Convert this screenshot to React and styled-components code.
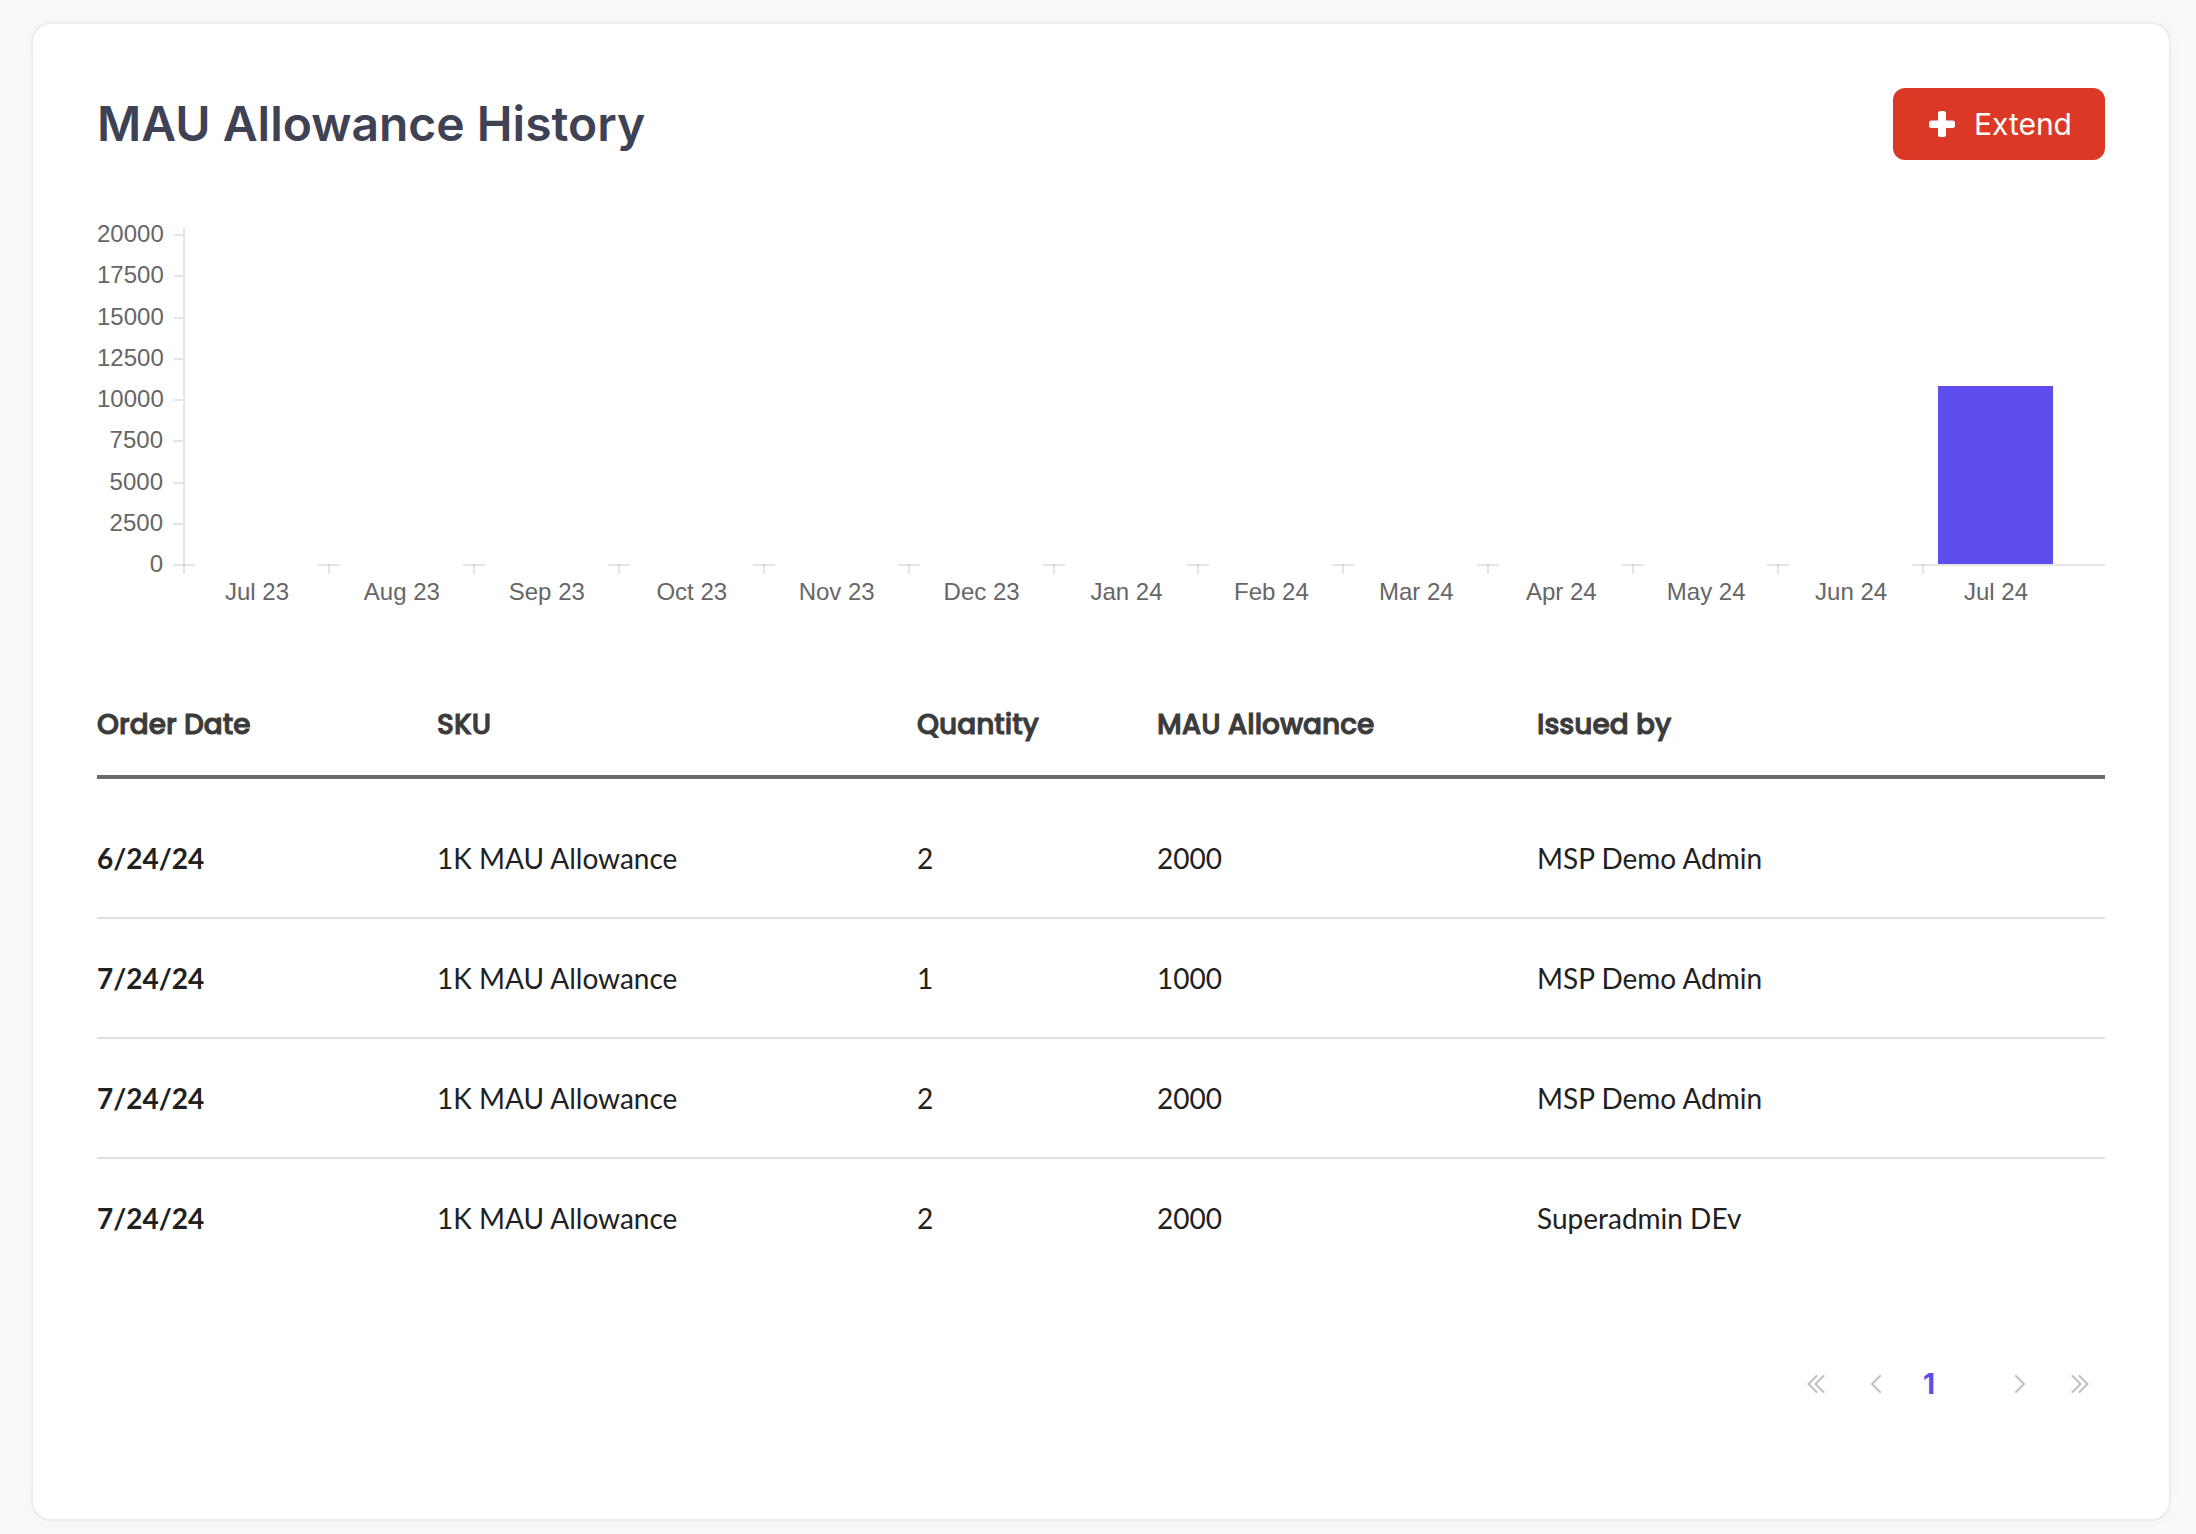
import React from "react";
import styled, { createGlobalStyle } from "styled-components";

const GlobalStyle = createGlobalStyle`
  *, *::before, *::after { box-sizing: border-box; }
  body {
    margin: 0;
    background: #f8f9fb;
    font-family: Inter, "Liberation Sans", sans-serif;
  }
`;

const axisColor = "rgba(0, 0, 0, 0.1)";

const Page = styled.main`
  padding: 22px 25px 10px 31px;
`;

const Card = styled.section`
  display: flex;
  flex-direction: column;
  padding: 64px;
  border: 2px solid #ebebf0;
  border-radius: 20px;
  background: #fff;
  box-shadow: 0 0 20px rgba(0, 0, 0, 0.02);
`;

const Header = styled.header`
  display: flex;
  align-items: center;
  justify-content: space-between;
`;

const Title = styled.h1`
  margin: 0;
  color: #3f4254;
  font-size: 48px;
  font-weight: 600;
  line-height: 72px;
`;

const ExtendButton = styled.button`
  display: flex;
  align-items: center;
  gap: 16px;
  height: 72px;
  padding: 0 33px;
  border: 0;
  border-radius: 12px;
  background: #db3926;
  color: #fff;
  font: 400 30px/36px Inter, sans-serif;
  cursor: pointer;
`;

const PlusIcon = styled.svg`
  width: 32px;
  height: 32px;
  fill: currentColor;
`;

const Chart = styled.figure`
  display: grid;
  grid-template-columns: 86px 1fr;
  margin: 60px 0 0;
  color: #666;
  font: 24px/28px "Liberation Sans", sans-serif;
`;

const YAxis = styled.div`
  display: flex;
  flex-direction: column;
  justify-content: space-between;
  height: 360px;
`;

const YRow = styled.div`
  display: flex;
  justify-content: flex-end;
  gap: 10px;
  height: 30px;
`;

const YTick = styled.span`
  align-self: center;
  width: 10px;
  height: 2px;
  background: ${axisColor};
`;

const Plot = styled.div`
  display: flex;
  padding-top: 8px;
`;

const AxisLine = styled.span`
  width: 2px;
  height: 336px;
  margin-right: -2px;
  background: ${axisColor};
`;

const Month = styled.div`
  display: flex;
  flex: 1 1 0;
  flex-direction: column;
`;

const BarArea = styled.div`
  display: flex;
  justify-content: center;
  align-items: flex-end;
  height: 336px;
  padding-left: 2px;
`;

const Bar = styled.div`
  width: 81%;
  background: #5d4eeb;
`;

const MonthTick = styled.div`
  display: flex;
  justify-content: space-between;
  height: 10px;
  border-left: 2px solid ${axisColor};
`;

const Dash = styled.span`
  flex: ${(p) => (p.$full ? "1" : "0 0 12px")};
  height: 2px;
  background: ${axisColor};
  &:first-child { margin-left: -2px; }
  &:last-child:not(:first-child) { flex-basis: 10px; }
`;

const MonthLabel = styled.span`
  padding-left: 3px;
  margin-top: 4px;
  text-align: center;
  white-space: nowrap;
`;

const AxisTail = styled.span`
  width: 38px;
  height: 2px;
  margin-top: 336px;
  background: ${axisColor};
`;

const Table = styled.table`
  width: 100%;
  margin-top: 65px;
  border-collapse: separate;
  border-spacing: 0;
  table-layout: fixed;
  color: #212121;
  font: 28px/36px Lato, sans-serif;
`;

const Column = styled.col`
  width: ${(p) => p.$width};
`;

const HeadCell = styled.th`
  height: 108px;
  padding: 4px 0 0;
  border-bottom: 4px solid #6b6b6b;
  color: #3b3b3b;
  font: 500 28px/36px Poppins, Inter, sans-serif;
  -webkit-text-stroke: 1px currentColor;
  text-align: left;
`;

const Body = styled.tbody`
  &::before {
    content: "";
    display: block;
    height: 20px;
  }
`;

const Cell = styled.td`
  height: 120px;
  padding: 0;
  border-bottom: 2px solid #e0e0e0;
  tr:last-child > & { border-bottom-color: transparent; }
`;

const DateCell = styled(Cell)`
  font-weight: 700;
`;

const Pager = styled.nav`
  display: flex;
  justify-content: flex-end;
  align-items: center;
  gap: 10px;
  margin-top: 80px;
  margin-bottom: 46px;
`;

const PagerButton = styled.button`
  display: flex;
  align-items: center;
  justify-content: center;
  width: 50px;
  height: 50px;
  padding: 0;
  border: 0;
  background: none;
  color: #c4c4c4;
`;

const CurrentPage = styled(PagerButton)`
  justify-content: flex-start;
  width: 74px;
  padding-left: 12px;
  color: #5d4eeb;
  font: 700 28px/36px Inter, sans-serif;
`;

const Chevron = styled.svg`
  width: 24px;
  height: 24px;
  fill: none;
  stroke: currentColor;
  stroke-width: 2.4;
  stroke-linecap: round;
  stroke-linejoin: round;
`;

const ticks = [20000, 17500, 15000, 12500, 10000, 7500, 5000, 2500, 0];
const axisMax = 20000;
const axisHeight = 330;

const months = [
  ["Jul 23", 0], ["Aug 23", 0], ["Sep 23", 0], ["Oct 23", 0], ["Nov 23", 0],
  ["Dec 23", 0], ["Jan 24", 0], ["Feb 24", 0], ["Mar 24", 0], ["Apr 24", 0],
  ["May 24", 0], ["Jun 24", 0], ["Jul 24", 10800],
];

const columns = [
  ["Order Date", "340px"],
  ["SKU", "480px"],
  ["Quantity", "240px"],
  ["MAU Allowance", "380px"],
  ["Issued by", "auto"],
];

const orders = [
  ["6/24/24", "1K MAU Allowance", 2, 2000, "MSP Demo Admin"],
  ["7/24/24", "1K MAU Allowance", 1, 1000, "MSP Demo Admin"],
  ["7/24/24", "1K MAU Allowance", 2, 2000, "MSP Demo Admin"],
  ["7/24/24", "1K MAU Allowance", 2, 2000, "Superadmin DEv"],
];

function AllowanceChart() {
  return (
    <Chart aria-label="MAU allowance by month">
      <YAxis>
        {ticks.map((t) => (
          <YRow key={t}>{t}<YTick /></YRow>
        ))}
      </YAxis>
      <Plot>
        <AxisLine />
        {months.map(([label, value]) => (
          <Month key={label}>
            <BarArea>
              {value > 0 && (
                <Bar style={{ height: Math.round((value / axisMax) * axisHeight) }} />
              )}
            </BarArea>
            <MonthTick>
              <Dash $full={value > 0} />
              {value === 0 && <Dash />}
            </MonthTick>
            <MonthLabel>{label}</MonthLabel>
          </Month>
        ))}
        <AxisTail />
      </Plot>
    </Chart>
  );
}

export default function App() {
  return (
    <>
      <GlobalStyle />
      <Page>
        <Card>
          <Header>
            <Title>MAU Allowance History</Title>
            <ExtendButton type="button">
              <PlusIcon viewBox="0 0 32 32" aria-hidden="true">
                <rect x="12" y="3" width="8" height="26" rx="2.5" />
                <rect x="3" y="12.5" width="26" height="7.5" rx="2.5" />
              </PlusIcon>
              Extend
            </ExtendButton>
          </Header>
          <AllowanceChart />
          <Table>
            <colgroup>
              {columns.map(([name, width]) => <Column key={name} $width={width} />)}
            </colgroup>
            <thead>
              <tr>
                {columns.map(([name]) => <HeadCell key={name} scope="col">{name}</HeadCell>)}
              </tr>
            </thead>
            <Body>
              {orders.map(([date, sku, quantity, allowance, issuer], i) => (
                <tr key={i}>
                  <DateCell>{date}</DateCell>
                  <Cell>{sku}</Cell>
                  <Cell>{quantity}</Cell>
                  <Cell>{allowance}</Cell>
                  <Cell>{issuer}</Cell>
                </tr>
              ))}
            </Body>
          </Table>
          <Pager aria-label="Pagination">
            <PagerButton type="button" aria-label="First page">
              <Chevron viewBox="0 0 24 24"><path d="m12.5 4-8 8 8 8M19.5 4l-8 8 8 8" /></Chevron>
            </PagerButton>
            <PagerButton type="button" aria-label="Previous page">
              <Chevron viewBox="0 0 24 24"><path d="m16 4-8 8 8 8" /></Chevron>
            </PagerButton>
            <CurrentPage type="button" aria-current="page">1</CurrentPage>
            <PagerButton type="button" aria-label="Next page">
              <Chevron viewBox="0 0 24 24"><path d="m8 4 8 8-8 8" /></Chevron>
            </PagerButton>
            <PagerButton type="button" aria-label="Last page">
              <Chevron viewBox="0 0 24 24"><path d="m4.5 4 8 8-8 8M11.5 4l8 8-8 8" /></Chevron>
            </PagerButton>
          </Pager>
        </Card>
      </Page>
    </>
  );
}
